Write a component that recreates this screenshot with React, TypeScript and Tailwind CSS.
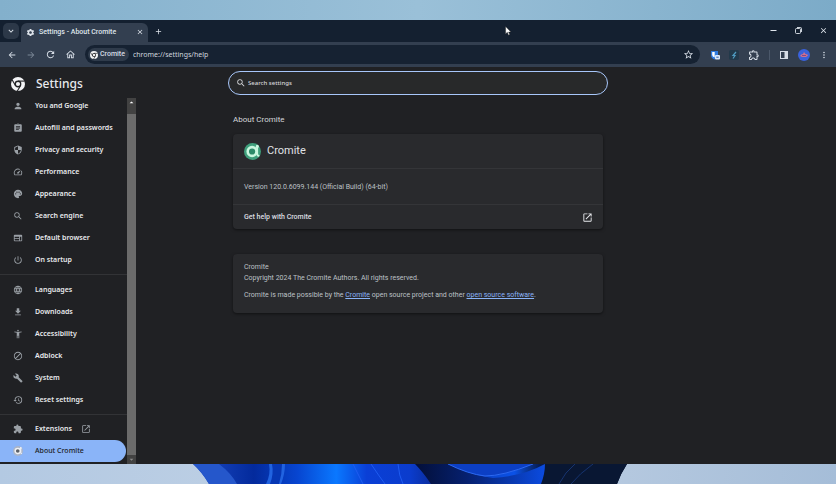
import type { ReactNode } from "react";
import type { IconType } from "react-icons";
import {
  MdAccessibilityNew,
  MdAdd,
  MdArrowBack,
  MdArrowDropDown,
  MdArrowDropUp,
  MdArrowForward,
  MdAssignment,
  MdBlock,
  MdBuild,
  MdClose,
  MdExtension,
  MdFileDownload,
  MdHistory,
  MdKeyboardArrowDown,
  MdLanguage,
  MdMoreVert,
  MdOpenInNew,
  MdOutlineExtension,
  MdOutlineHome,
  MdOutlineSpeed,
  MdOutlineWeb,
  MdPalette,
  MdPerson,
  MdPowerSettingsNew,
  MdRefresh,
  MdSearch,
  MdSecurity,
  MdSettings,
  MdStarBorder,
} from "react-icons/md";

type NavItem = { label: string; icon: IconType };

const basicItems: NavItem[] = [
  { label: "You and Google", icon: MdPerson },
  { label: "Autofill and passwords", icon: MdAssignment },
  { label: "Privacy and security", icon: MdSecurity },
  { label: "Performance", icon: MdOutlineSpeed },
  { label: "Appearance", icon: MdPalette },
  { label: "Search engine", icon: MdSearch },
  { label: "Default browser", icon: MdOutlineWeb },
  { label: "On startup", icon: MdPowerSettingsNew },
];

const advancedItems: NavItem[] = [
  { label: "Languages", icon: MdLanguage },
  { label: "Downloads", icon: MdFileDownload },
  { label: "Accessibility", icon: MdAccessibilityNew },
  { label: "Adblock", icon: MdBlock },
  { label: "System", icon: MdBuild },
  { label: "Reset settings", icon: MdHistory },
];

function ChromeLogo({ className }: { className: string }) {
  return (
    <svg viewBox="0 0 24 24" className={className} aria-hidden="true">
      <circle cx="12" cy="12" r="12" fill="#f3f4f6" />
      <circle cx="12" cy="12" r="5.8" fill="#202124" />
      <circle cx="12" cy="12" r="3.6" fill="#f3f4f6" />
      <g stroke="#202124" strokeWidth="1.9">
        <path d="M12 7H23.5" />
        <path d="M7.6 14.5 1.9 4.7" />
        <path d="M16.4 14.5 10.7 24.4" />
      </g>
    </svg>
  );
}

function CromiteLogo({ className, disc, ring, core }: { className: string; disc: string; ring: string; core: string }) {
  return (
    <svg viewBox="0 0 24 24" className={className} aria-hidden="true">
      <circle cx="12" cy="12" r="12" fill={disc} />
      <circle cx="11.4" cy="12" r="6.2" fill={core} stroke={ring} strokeWidth="3.6" />
      <path d="M18.6 5v9.5q0 3.5 2 3.5" fill="none" stroke={ring} strokeWidth="2.6" strokeLinecap="round" />
      <circle cx="18.8" cy="4.8" r="2.2" fill={ring} />
    </svg>
  );
}

function TabStrip() {
  return (
    <div className="flex h-[22px] items-end bg-[#142030] text-[#dfe5ec]">
      <button aria-label="Search tabs" className="mb-[3px] ml-[3px] grid size-4 place-items-center rounded-[5px] bg-[#2c3848]">
        <MdKeyboardArrowDown className="size-2.5" />
      </button>
      <div className="ml-[2px] flex h-[19px] w-[127px] items-center rounded-t-md bg-[#333f50] pr-1 pb-px pl-[5px]">
        <MdSettings className="size-[9px]" />
        <span className="ml-1 flex-1 font-['Roboto'] text-[7px] font-medium whitespace-nowrap">Settings - About Cromite</span>
        <button aria-label="Close tab">
          <MdClose className="size-2" />
        </button>
      </div>
      <button aria-label="New tab" className="mb-[6px] ml-[6px]">
        <MdAdd className="size-[9px]" />
      </button>
      <div className="mb-[7px] ml-auto flex items-center gap-4 pr-2">
        <button aria-label="Minimize">
          <svg viewBox="0 0 9 9" className="size-[9px]" fill="none" stroke="currentColor">
            <path d="M1.5 4.5h6" />
          </svg>
        </button>
        <button aria-label="Restore">
          <svg viewBox="0 0 9 9" className="size-[9px]" fill="none" stroke="currentColor" strokeWidth="0.9">
            <rect x="1.5" y="2.5" width="5" height="5" rx="1" />
            <path d="M3 1.5h3.5q1 0 1 1V6" />
          </svg>
        </button>
        <button aria-label="Close">
          <MdClose className="size-[9px]" />
        </button>
      </div>
    </div>
  );
}

function Toolbar() {
  return (
    <div className="flex h-[25px] items-center bg-[#333f50] px-[7px] text-[#d6dde6]">
      <div className="flex items-center gap-[9px]">
        <button aria-label="Back">
          <MdArrowBack className="size-[10px]" />
        </button>
        <button aria-label="Forward" className="text-[#7b8796]">
          <MdArrowForward className="size-[10px]" />
        </button>
        <button aria-label="Reload">
          <MdRefresh className="size-[11px]" />
        </button>
        <button aria-label="Home">
          <MdOutlineHome className="size-[11px]" />
        </button>
      </div>
      <div className="ml-[9px] flex h-[19px] flex-1 items-center rounded-full bg-[#162232] pr-[6px] pl-[3px]">
        <span className="flex h-[13px] items-center gap-[2px] rounded-full bg-[#2f3b4b] pr-1 pl-[2px] font-['Roboto'] text-[7px] font-medium">
          <ChromeLogo className="size-2" />
          Cromite
        </span>
        <input
          aria-label="Address"
          defaultValue="chrome://settings/help"
          className="ml-1 min-w-0 flex-1 bg-transparent pt-px text-[7px] text-[#cfd6df] outline-none"
        />
        <button aria-label="Bookmark this tab">
          <MdStarBorder className="size-[11px]" />
        </button>
      </div>
      <div className="ml-[10px] flex items-center gap-[9px]">
        <button aria-label="Bitwarden">
          <svg viewBox="0 0 10 10" className="size-[10px]">
            <path d="M1 1h7v4Q8 8 4.5 9.5 1 8 1 5z" fill="#2f7be0" />
            <path d="M2.2 2h2.5v5.5Q2.2 6.5 2.2 5z" fill="#fff" />
            <rect x="5" y="5" width="5" height="4.5" rx="1" fill="#dbe8fa" />
            <path d="M6.3 7.2h2.4" stroke="#2f5fa8" strokeWidth="1" />
          </svg>
        </button>
        <button aria-label="Dark mode">
          <svg viewBox="0 0 10 10" className="size-[10px]">
            <rect width="10" height="10" rx="2" fill="#22394a" />
            <path d="M7 2 4 5.5h2L4 8.5" fill="none" stroke="#4f9bc0" strokeWidth="1.2" />
          </svg>
        </button>
        <button aria-label="Extensions">
          <MdOutlineExtension className="size-[12px]" />
        </button>
        <span className="h-[10px] w-px bg-[#4b586a]" />
        <button aria-label="Side panel">
          <svg viewBox="0 0 10 10" className="size-[10px]">
            <rect x="1.5" y="1.5" width="7" height="7" fill="none" stroke="currentColor" />
            <rect x="5.5" y="1.5" width="3" height="7" fill="currentColor" />
          </svg>
        </button>
        <button aria-label="Profile">
          <svg viewBox="0 0 12 12" className="size-3">
            <circle cx="6" cy="6" r="6" fill="#3a62dc" />
            <path d="M2 7q1-2 3-2l1-2 1.5 2Q10 5 10 6.5L8 8H4z" fill="#d0708f" />
            <path d="M4 6.5h4" stroke="#6a3f8a" strokeWidth="0.8" />
          </svg>
        </button>
        <button aria-label="Menu">
          <MdMoreVert className="size-[10px]" />
        </button>
      </div>
    </div>
  );
}

function NavLink({ item }: { item: NavItem }) {
  const Icon = item.icon;
  return (
    <a href="#" className="flex h-[22px] items-center pl-[13px] text-[7px] font-semibold text-[#e8eaed]">
      <Icon className="size-[10px] text-[#9aa0a6]" />
      <span className="ml-3">{item.label}</span>
    </a>
  );
}

function Sidebar() {
  return (
    <aside className="flex">
      <nav className="min-w-0 flex-1">
        {basicItems.map((item) => (
          <NavLink key={item.label} item={item} />
        ))}
        <hr className="mt-[3px] mb-1 border-[#323336]" />
        {advancedItems.map((item) => (
          <NavLink key={item.label} item={item} />
        ))}
        <hr className="my-[3px] border-[#323336]" />
        <a href="#" className="flex h-[22px] items-center pl-[13px] text-[7px] font-semibold text-[#e8eaed]">
          <MdExtension className="size-[10px] text-[#9aa0a6]" />
          <span className="ml-3">Extensions</span>
          <MdOpenInNew className="ml-[9px] size-[10px] text-[#9aa0a6]" />
        </a>
        <a href="#" className="mr-px flex h-[22px] items-center rounded-r-full bg-[#8ab4f8] pl-[13px] text-[7px] font-medium text-[#202124]">
          <CromiteLogo className="size-[10px]" disc="#a9b4c8" ring="#eef0f4" core="#5b6068" />
          <span className="ml-3">About Cromite</span>
        </a>
      </nav>
      {/* Scrollbar */}
      <div className="mt-[3px] flex w-[9px] flex-col bg-[#6b6b6b] text-white">
        <div className="grid h-4 place-items-start justify-center bg-[#424242]">
          <MdArrowDropUp className="size-[9px]" />
        </div>
        <div className="mt-auto grid h-[9px] place-items-center bg-[#424242] text-[#8b8b8b]">
          <MdArrowDropDown className="size-[9px]" />
        </div>
      </div>
    </aside>
  );
}

function Card({ children }: { children: ReactNode }) {
  return <section className="rounded bg-[#292a2d] shadow-[0_1px_3px_rgba(0,0,0,0.5)]">{children}</section>;
}

function AboutPage() {
  return (
    <main className="mx-auto w-full max-w-[370px] pt-[19px] font-['Roboto'] text-[7px] text-[#bdc1c6]">
      <h2 className="text-[8px] leading-3 text-[#d5d7da]">About Cromite</h2>
      <div className="mt-2">
        <Card>
          <div className="flex h-[34px] items-center gap-[6px] pl-[11px]">
            <CromiteLogo className="size-[17px]" disc="#3f9f7c" ring="#c9f7df" core="#2c8a68" />
            <h1 className="pt-px text-[11px] text-[#e0e2e5]">Cromite</h1>
          </div>
          <div className="flex h-[36px] items-center border-t border-[#343538] pt-px pl-[11px]">
            Version 120.0.6099.144 (Official Build) (64-bit)
          </div>
          <a href="#" className="flex h-[25px] items-center justify-between border-t border-[#343538] pr-[10px] pl-[11px] font-medium text-[#dcdee1]">
            Get help with Cromite
            <MdOpenInNew className="size-[11px] text-[#e8eaed]" />
          </a>
        </Card>
      </div>
      <div className="mt-[25px]">
        <Card>
          <div className="px-[11px] pt-2 pb-3 leading-[11px]">
            <p>Cromite</p>
            <p>Copyright 2024 The Cromite Authors. All rights reserved.</p>
            <p className="mt-[6px]">
              Cromite is made possible by the{" "}
              <a href="#" className="text-[#8ab4f8] underline">Cromite</a> open source project and other{" "}
              <a href="#" className="text-[#8ab4f8] underline">open source software</a>.
            </p>
          </div>
        </Card>
      </div>
    </main>
  );
}

// Bloom wallpaper visible under the window
function Bloom() {
  return (
    <svg viewBox="0 0 450 20" className="mx-auto block h-5 w-[450px]" aria-hidden="true">
      <defs>
        <linearGradient id="petals" gradientUnits="userSpaceOnUse" x1="0" y1="0" x2="434" y2="0">
          <stop offset="0" stopColor="#1d4bc4" />
          <stop offset="0.14" stopColor="#032a9c" />
          <stop offset="0.24" stopColor="#0745d0" />
          <stop offset="0.33" stopColor="#0a78ff" />
          <stop offset="0.4" stopColor="#0a3fd6" />
          <stop offset="0.5" stopColor="#0b3ccd" />
          <stop offset="0.56" stopColor="#0a2a94" />
          <stop offset="0.74" stopColor="#0b52e8" />
          <stop offset="0.8" stopColor="#071b4c" />
          <stop offset="1" stopColor="#0b1730" />
        </linearGradient>
        <linearGradient id="shade">
          <stop offset="0" stopColor="#030f38" />
          <stop offset="0.4" stopColor="#06206f" />
          <stop offset="1" stopColor="#0b4be0" />
        </linearGradient>
      </defs>
      <path d="M0 0H434Q428 9 424 20H16Q9 8 0 0z" fill="url(#petals)" />
      <path d="M0 0H26Q38 9 44 20H16Q9 8 0 0z" fill="#2557cb" />
      <path d="M76 0H92Q92 10 88 20H73Q78 10 76 0z" fill="#2163e0" />
      <path d="M79 0H89Q89 10 86 20H77Q81 10 79 0z" fill="#0637b4" />
      <path d="M160 0Q166 12 170 20M178 0Q186 12 192 20M205 0Q206 12 210 20" stroke="#1f5cf0" fill="none" />
      <path d="M222 0H257Q280 12 300 14Q330 12 352 0V20H238Q230 8 222 0z" fill="url(#shade)" />
      <path d="M255 0H340Q310 12 292 12Q275 10 255 0z" fill="#0c3fc4" />
      <path d="M255 0Q275 10 292 12Q310 12 340 0" fill="none" stroke="#2c68f0" />
      <path d="M352 0H434Q428 9 424 20H348Q352 10 352 0z" fill="#091733" />
      <path d="M382 0Q372 8 366 20M400 0Q386 10 378 20" stroke="#16336e" fill="none" />
    </svg>
  );
}

export default function App() {
  return (
    <div className="flex min-h-screen flex-col bg-[#202124] font-['Noto_Sans','Segoe_UI',sans-serif]">
      <div className="h-5 bg-linear-to-r from-[#83b0cc] via-[#9ac0d8] to-[#7cabc8]" />
      <TabStrip />
      <Toolbar />
      <div className="grid flex-1 grid-cols-[136px_minmax(0,1fr)_136px] grid-rows-[auto_1fr]">
        <header className="flex items-center pt-[5px] pl-[11px]">
          <ChromeLogo className="size-[14px]" />
          <span className="ml-[11px] text-[12px] font-medium text-[#e8eaed]">Settings</span>
        </header>
        <div className="pt-1">
          <label className="mx-auto flex h-6 max-w-[380px] items-center rounded-full border border-[#a8c7fa] bg-[#28292a] pl-[7px] text-[#d5d7da]">
            <MdSearch className="size-[10px]" />
            <input
              aria-label="Search settings"
              placeholder="Search settings"
              className="ml-[2px] min-w-0 flex-1 bg-transparent text-[6px] font-medium outline-none placeholder:text-[#d5d7da]"
            />
          </label>
        </div>
        <div />
        <Sidebar />
        <AboutPage />
      </div>
      <div className="bg-linear-to-r from-[#b3c9e2] via-[#c3d3e6] to-[#a5bdd8]">
        <Bloom />
      </div>
      {/* Mouse pointer */}
      <svg viewBox="0 0 8 12" className="absolute top-[26px] left-[505px] h-[10px] w-[7px]" aria-hidden="true">
        <path d="M0.5 0.5V9.5L2.6 7.6 4 11 5.5 10.3 4.1 7.2H7z" fill="#fff" stroke="#222" strokeWidth="0.5" />
      </svg>
    </div>
  );
}
